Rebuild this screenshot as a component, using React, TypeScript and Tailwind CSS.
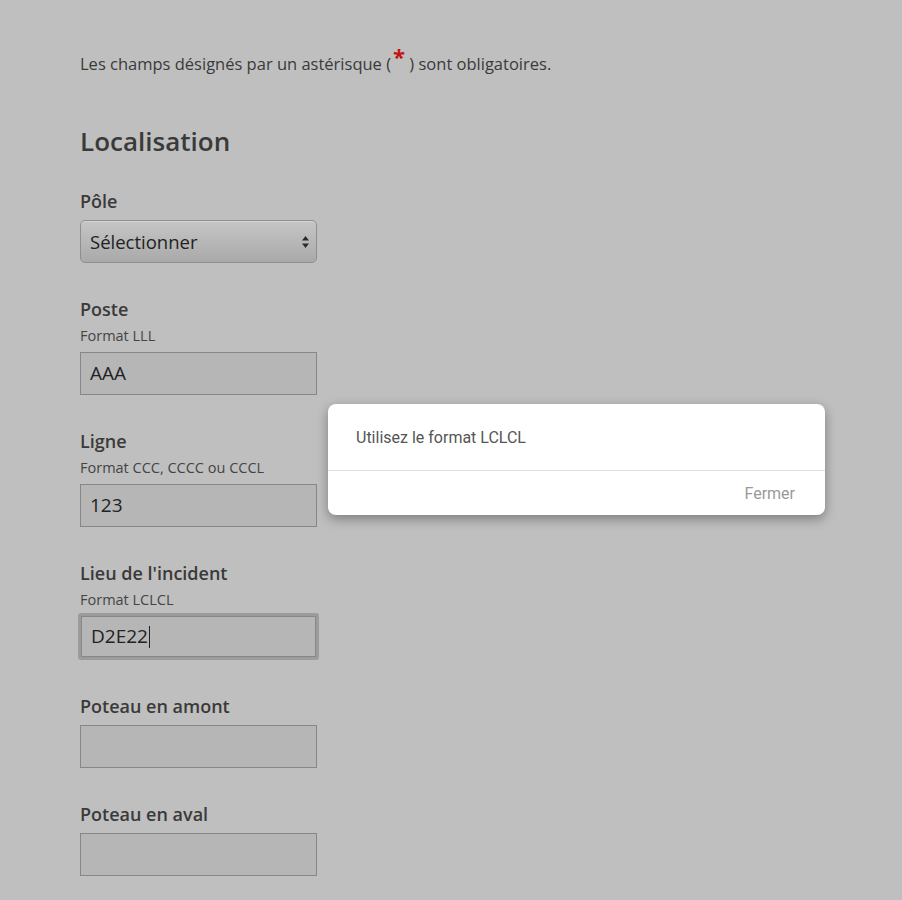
import React from 'react';

const FIELDS = [
  { label: 'Poste', hint: 'Format LLL', value: 'AAA' },
  { label: 'Ligne', hint: 'Format CCC, CCCC ou CCCL', value: '123' },
  { label: "Lieu de l'incident", hint: 'Format LCLCL', value: 'D2E22', focused: true },
  { label: 'Poteau en amont', hint: '', value: '' },
  { label: 'Poteau en aval', hint: '', value: '' },
];

function Field({ label, hint, value, focused }: { label: string; hint: string; value: string; focused?: boolean }) {
  return (
    <div className="mt-[33px]">
      <div className="h-[26px] text-[18px] leading-[26px] font-semibold text-[#3a3a3a]">{label}</div>
      {hint ? (
        <div className="mt-[4px] h-5 text-[14.5px] leading-5 text-[#444]">{hint}</div>
      ) : null}
      <div
        className={
          focused
            ? 'mt-[3px] -ml-[2px] w-[241px] h-[47px] border-[3px] border-[#9c9c9c] rounded-[3px] flex'
            : 'mt-[6px] w-[237px] h-[43px] flex'
        }
      >
        <div className="flex-1 flex items-center bg-[#b6b6b6] border border-[#878787] px-[9px] text-[19px] text-[#222]">
          {value}
          {focused ? <span className="inline-block w-px h-[22px] bg-[#222] ml-px" /> : null}
        </div>
      </div>
    </div>
  );
}

export default function App() {
  return (
    <div className="relative min-h-[900px] bg-[#bfbfbf] font-['Open_Sans',sans-serif]">
      <div className="pl-[80px] pt-[50px]">
        <p className="text-[16.5px] leading-6 text-[#3a3a3a]">
          Les champs désignés par un astérisque (
          <span className="relative -top-[5px] ml-[2px] text-[22px] font-bold text-[#c0150f] leading-none">*</span>
          {' '}) sont obligatoires.
        </p>

        <h2 className="mt-[48px] text-[26px] leading-[34px] font-semibold text-[#3a3a3a]">Localisation</h2>

        <div className="mt-[30px]">
          <div className="h-[26px] text-[18px] leading-[26px] font-semibold text-[#3a3a3a]">Pôle</div>
          <div className="mt-[6px] w-[237px] h-[43px] rounded-[5px] border border-[#8f8f8f] bg-gradient-to-b from-[#c6c6c6] to-[#a9a9a9] shadow-[inset_0_1px_0_rgba(255,255,255,0.25)] flex items-center justify-between pl-[9px] pr-[6px]">
            <span className="text-[18.5px] text-[#222]">Sélectionner</span>
            <svg width="9" height="14" viewBox="0 0 9 14">
              <path d="M4.5 1 L8 5.5 H1 Z" fill="#2a2a2a" />
              <path d="M4.5 13 L8 8.5 H1 Z" fill="#2a2a2a" />
            </svg>
          </div>
        </div>

        <div className="pb-6">
          {FIELDS.map((f) => (
            <Field key={f.label} {...f} />
          ))}
        </div>
      </div>

      <div className="absolute left-[328px] top-[404px] w-[497px] bg-white rounded-[8px] shadow-[0_4px_12px_rgba(0,0,0,0.35)] font-['Roboto',sans-serif]">
        <div className="h-[66px] flex items-center pt-[2px] px-[28px] text-[16px] text-[#555]">Utilisez le format LCLCL</div>
        <div className="h-px bg-[#e2e2e2]" />
        <div className="h-[44px] flex items-center justify-end pt-[2px] px-[30px] text-[16px] text-[#9a9a9a]">Fermer</div>
      </div>
    </div>
  );
}
